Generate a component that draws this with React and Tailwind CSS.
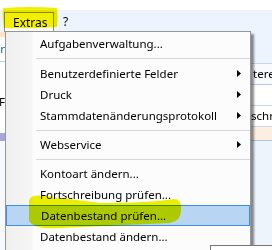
import React from 'react';

const items = [
  { t: 'Aufgabenverwaltung...' },
  { sep: true, first: true },
  { t: 'Benutzerdefinierte Felder', sub: true },
  { t: 'Druck', sub: true },
  { t: 'Stammdatenänderungsprotokoll', sub: true },
  { sep: true },
  { t: 'Webservice', sub: true },
  { sep: true },
  { t: 'Kontoart ändern...' },
  { t: 'Fortschreibung prüfen...' },
  { t: 'Datenbestand prüfen...', active: true },
  { t: 'Datenbestand ändern...' },
];

const Arrow = () => (
  <svg width="4" height="7" viewBox="0 0 4 7" className="ml-auto">
    <polygon points="0,0 4,3.5 0,7" fill="#000" />
  </svg>
);

const MenuRow = ({ item }) => {
  if (item.sep) {
    return (
      <div className={`${item.first ? 'h-[9px]' : 'h-[8px]'} pt-[4px] pl-[30px]`}>
        <div className="h-px bg-[#d7d7d7]" />
      </div>
    );
  }
  return (
    <div
      className={`flex items-center h-[21px] pl-[34px] pr-[9px] whitespace-nowrap ${
        item.active ? 'border border-[#3d8fe0] bg-[#b8d6f3] pl-[33px] pr-[8px]' : ''
      }`}
    >
      <span>{item.t}</span>
      {item.sub && <Arrow />}
    </div>
  );
};

export default function App() {
  return (
    <div className="relative w-[272px] h-[250px] overflow-hidden bg-white font-['Noto_Sans',sans-serif] text-[11.5px] text-black leading-none">
      {/* white strip above menubar */}
      <div className="h-[10px] bg-white" />

      {/* menubar */}
      <div className="flex items-end h-[22px] bg-[#eef4fd]">
        <div className="ml-[4px] flex items-center h-[20px] w-[50px] pl-[8px] text-[12px] bg-white border border-b-0 border-[#8f8f8f]">
          Extras
        </div>
        <div className="flex items-center h-[20px] pl-[9px] text-[12px]">?</div>
      </div>

      {/* application content behind the menu */}
      <div className="flex h-[218px]">
        <div className="w-[5px] flex flex-col">
          <div className="h-[5px] bg-[#fbe3c6]" />
          <div className="h-[24px] flex items-center justify-end overflow-hidden text-[#1f5fbf]">r</div>
          <div className="h-px bg-[#cfcfcf]" />
          <div className="h-[30px]" />
          <div className="h-[20px] flex items-center justify-end overflow-hidden">F</div>
          <div className="h-[21px]" />
          <div className="h-[8px] bg-[#a6a6dc]" />
          <div className="flex-1 bg-[#f6f9fd]" />
        </div>
        <div className="flex-1 bg-white" />
        <div className="w-[21px] flex flex-col bg-[#eef4fd]">
          <div className="h-[31px]" />
          <div className="h-px bg-[#c6d7ee]" />
          <div className="h-[20px] flex items-center pl-[2px] bg-[#f7faff] whitespace-nowrap overflow-hidden">tere</div>
          <div className="h-px bg-[#b9cde8]" />
          <div className="h-[20px] bg-white" />
          <div className="h-px bg-[#c6d7ee]" />
          <div className="h-[20px] flex items-center bg-white whitespace-nowrap overflow-hidden">schr</div>
          <div className="h-px bg-[#c6d7ee]" />
          <div className="h-[13px] bg-[#fdeee2]" />
          <div className="h-px bg-[#a9c7ea]" />
          <div className="flex-1 bg-[#eef4fc]" />
        </div>
      </div>

      {/* dropdown menu */}
      <div className="absolute left-[5px] top-[31px] w-[246px] h-[240px] border border-[#979797] pt-[1px] bg-[linear-gradient(to_right,#efefef_0px,#f6f6f6_26px,#fcfcfc_27px)] shadow-[3px_3px_2px_rgba(0,0,0,0.45)]">
        {items.map((it, i) => (
          <MenuRow key={i} item={it} />
        ))}
      </div>

      {/* tooltip edge at bottom */}
      <div className="absolute left-[210px] top-[245px] w-[80px] h-[20px] border border-[#767676] bg-white" />

      {/* highlighter strokes */}
      <svg className="absolute left-0 top-0 mix-blend-multiply pointer-events-none" width="272" height="250">
        <path d="M3,8 Q30,6 57,8 Q58,18 57,27 Q30,29 4,28 Q2,18 3,8 Z" fill="#f2f000" />
        <path
          d="M29,201 Q30,194 45,196 L100,203 Q150,203 173,199 Q182,198 181,210 Q181,221 170,223 L60,228 Q35,230 29,221 Z"
          fill="#f0f000"
        />
      </svg>
    </div>
  );
}
